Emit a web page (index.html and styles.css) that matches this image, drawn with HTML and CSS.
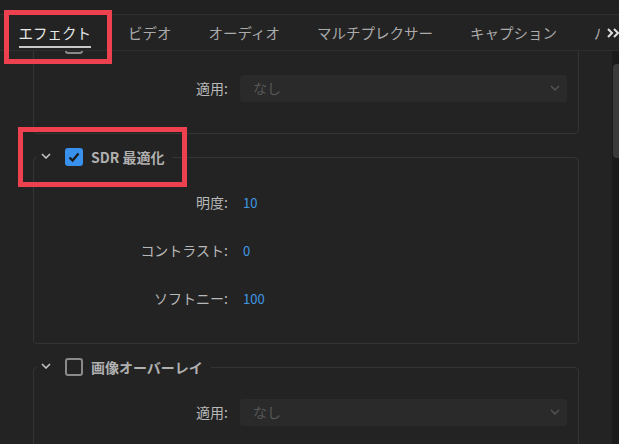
FILE: index.html
```html
<html>
<head>
 <meta charset="utf-8">
 <link rel="stylesheet" href="styles.css">
</head>
<body>
 <div class="topstrip"></div>
 <div class="tabbar">
  <div class="tabs">
   <div class="tab active"><span>エフェクト</span></div>
   <div class="tab"><span>ビデオ</span></div>
   <div class="tab"><span>オーディオ</span></div>
   <div class="tab"><span>マルチプレクサー</span></div>
   <div class="tab"><span>キャプション</span></div>
   <div class="tab"><span>パブリッシュ</span></div>
  </div>
  <div class="more">
   <svg width="12" height="10" viewBox="0 0 12 10"><polyline points="1,1 5,5 1,9" /><polyline points="7,1 11,5 7,9" /></svg>
  </div>
 </div>
 <div class="main">
  <div class="scroll">
   <div class="panel">
    <fieldset class="card first">
     <legend>
      <svg class="chev" width="10" height="6" viewBox="0 0 10 6"><polyline points="1,1 5,5 9,1" /></svg>
      <span class="check"></span>
     </legend>
     <div class="rows">
      <div class="label">適用:</div>
      <div class="select"><span>なし</span><svg width="10" height="6" viewBox="0 0 10 6"><polyline points="1,1 5,5 9,1" /></svg></div>
     </div>
    </fieldset>
    <fieldset class="card">
     <legend>
      <svg class="chev" width="10" height="6" viewBox="0 0 10 6"><polyline points="1,1 5,5 9,1" /></svg>
      <span class="check on"><svg width="18" height="18" viewBox="0 0 18 18"><polyline points="4.5,9.5 7.6,12.5 13.5,5.6" /></svg></span>
      <span class="title">SDR 最適化</span>
     </legend>
     <div class="rows">
      <div class="label">明度:</div>
      <div class="value">10</div>
      <div class="label">コントラスト:</div>
      <div class="value">0</div>
      <div class="label">ソフトニー:</div>
      <div class="value">100</div>
     </div>
    </fieldset>
    <fieldset class="card">
     <legend>
      <svg class="chev" width="10" height="6" viewBox="0 0 10 6"><polyline points="1,1 5,5 9,1" /></svg>
      <span class="check"></span>
      <span class="title">画像オーバーレイ</span>
     </legend>
     <div class="rows">
      <div class="label">適用:</div>
      <div class="select"><span>なし</span><svg width="10" height="6" viewBox="0 0 10 6"><polyline points="1,1 5,5 9,1" /></svg></div>
     </div>
    </fieldset>
   </div>
  </div>
  <div class="track"><div class="thumb"></div></div>
 </div>
 <div class="mark mark-tab"></div>
 <div class="mark mark-sdr"></div>
</body>
</html>
```

FILE: styles.css
```css
body {
 margin: 0;
 width: 619px;
 height: 444px;
 overflow: hidden;
 background: #232323;
 font-family: "Noto Sans CJK JP", "Noto Sans", sans-serif;
 color: #b4b4b4;
 position: relative;
}
.topstrip {
 height: 14px;
 background: #212121;
}
.tabbar {
 display: flex;
 height: 35px;
 border-top: 1px solid #2e2e2e;
 border-bottom: 1px solid #2e2e2e;
}
.tabs {
 display: flex;
 width: 601px;
 overflow: hidden;
}
.tab {
 flex: none;
 display: flex;
 align-items: center;
 padding: 0 18.5px;
 font-size: 14.5px;
 color: #aaa;
 white-space: nowrap;
 position: relative;
}
.tab.active {
 color: #e8e8e8;
}
.tab.active::after {
 content: "";
 position: absolute;
 left: 18.5px;
 right: 18.5px;
 bottom: 2px;
 height: 2px;
 background: #c8c8c8;
}
.more {
 flex: 1;
 display: flex;
 align-items: center;
 padding-left: 7px;
}
.more polyline {
 fill: none;
 stroke: #e0e0e0;
 stroke-width: 2;
}
.main {
 display: flex;
 height: 394px;
}
.scroll {
 flex: 1;
 overflow: hidden;
}
.panel {
 margin-top: -15px;
 padding: 0 33px;
 display: flex;
 flex-direction: column;
 gap: 14px;
}
.card {
 margin: 0;
 padding: 0;
 min-width: 0;
 border: 1px solid #343434;
 border-radius: 4px;
}
.card legend {
 display: flex;
 align-items: center;
 height: 18px;
 margin-left: 3px;
 padding: 0 8px 0 4px;
}
.chev {
 margin: -3px 14px 0 0;
}
.chev polyline {
 fill: none;
 stroke: #c4c4c4;
 stroke-width: 1.6;
}
.check {
 width: 18px;
 height: 18px;
 box-sizing: border-box;
 border: 2px solid #8a8a8a;
 border-radius: 3px;
}
.check.on {
 border: none;
 background: #3891ec;
}
.check svg {
 display: block;
}
.check polyline {
 fill: none;
 stroke: #1a1a1a;
 stroke-width: 2.3;
}
.title {
 margin-left: 8px;
 font-size: 14px;
 font-weight: bold;
 color: #b0b0b0;
 line-height: 18px;
}
.rows {
 display: grid;
 grid-template-columns: 194px 1fr;
 grid-auto-rows: 28px;
 align-items: center;
 column-gap: 12px;
 row-gap: 20px;
 padding: 22px 11px 31px 0;
}
.card.first .rows {
 padding-top: 20px;
}
.label {
 text-align: right;
 font-size: 14px;
 color: #b8b8b8;
}
.value {
 padding-left: 3px;
 font-size: 13px;
 color: #3f98e6;
}
.select {
 height: 27px;
 display: flex;
 align-items: center;
 justify-content: space-between;
 padding: 0 7px 0 13px;
 background: #2a2a2a;
 border-radius: 3px;
 font-size: 14px;
 color: #585858;
}
.select polyline {
 fill: none;
 stroke: #555;
 stroke-width: 1.4;
}
.track {
 width: 7px;
 background: #1b1b1b;
 overflow: hidden;
}
.thumb {
 margin: 13px 0 0 1px;
 width: 10px;
 height: 94px;
 border-radius: 4px;
 background: #3a3a3a;
}
.mark {
 position: absolute;
 border: 5px solid #ee4150;
 box-sizing: border-box;
}
.mark-tab {
 left: 4px;
 top: 10px;
 width: 108px;
 height: 54px;
}
.mark-sdr {
 left: 18px;
 top: 127px;
 width: 169px;
 height: 60px;
}
```
